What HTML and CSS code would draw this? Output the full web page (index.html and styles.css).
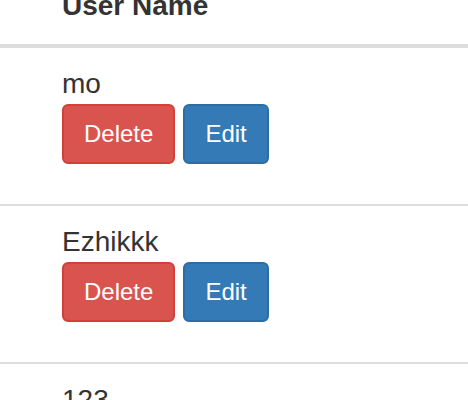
FILE: index.html
```html
<!DOCTYPE html>
<html>
<head>
<meta charset="utf-8">
<link rel="stylesheet" href="styles.css">
</head>
<body>
<div class="table">
  <div class="thead">User Name</div>
  <div class="row">
    <div class="name">mo</div>
    <div class="actions">
      <button class="btn btn-danger">Delete</button>
      <button class="btn btn-primary">Edit</button>
    </div>
  </div>
  <div class="row">
    <div class="name">Ezhikkk</div>
    <div class="actions">
      <button class="btn btn-danger">Delete</button>
      <button class="btn btn-primary">Edit</button>
    </div>
  </div>
  <div class="row">
    <div class="name">123</div>
    <div class="actions">
      <button class="btn btn-danger">Delete</button>
      <button class="btn btn-primary">Edit</button>
    </div>
  </div>
</div>
</body>
</html>
```
FILE: styles.css
```css
html, body {
  margin: 0;
  padding: 0;
  background: #fff;
}
body {
  font-family: "Liberation Sans", Arial, Helvetica, sans-serif;
  font-size: 28px;
  line-height: 40px;
  color: #333;
  overflow: hidden;
}
.table {
  margin-top: -14px;
}
.thead {
  font-weight: bold;
  padding: 0 16px 18px 62px;
  border-bottom: 4px solid #ddd;
}
.row {
  padding: 16px 16px 16px 62px;
  border-bottom: 2px solid #ddd;
}
.actions {
  display: flex;
  gap: 8px;
  margin-bottom: 24px;
}
.btn {
  font-family: "Liberation Sans", Arial, Helvetica, sans-serif;
  font-size: 24px;
  line-height: 36px;
  padding: 10px 20px;
  border-radius: 6px;
  border: 2px solid transparent;
  color: #fff;
  font-weight: normal;
  cursor: pointer;
}
.btn-danger {
  background: #d9534f;
  border-color: #d43f3a;
}
.btn-primary {
  background: #337ab7;
  border-color: #2e6da4;
}
```
